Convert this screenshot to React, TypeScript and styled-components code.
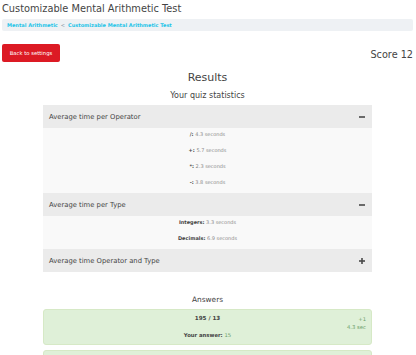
import { useState } from "react";
import { createGlobalStyle, styled } from "styled-components";

const GlobalStyle = createGlobalStyle`
  body {
    margin: 0;
    background: #ffffff;
    font-family: "DejaVu Sans", Verdana, sans-serif;
    color: #555555;
  }
`;

const operatorStats = [
  { label: "/:", value: "4.3 seconds" },
  { label: "+:", value: "5.7 seconds" },
  { label: "*:", value: "2.3 seconds" },
  { label: "-:", value: "3.8 seconds" },
];

const typeStats = [
  { label: "Integers:", value: "3.3 seconds" },
  { label: "Decimals:", value: "6.9 seconds" },
];

type Section = {
  title: string;
  rows: { label: string; value: string }[];
};

const sections: Section[] = [
  { title: "Average time per Operator", rows: operatorStats },
  { title: "Average time per Type", rows: typeStats },
  { title: "Average time Operator and Type", rows: [] },
];

const ToggleIcon = ({ open }: { open: boolean }) => (
  <svg width="6" height="6" viewBox="0 0 6 6">
    <rect x="0" y="2.2" width="6" height="1.6" fill="#4a4a4a" />
    {!open && <rect x="2.2" y="0" width="1.6" height="6" fill="#4a4a4a" />}
  </svg>
);

export default function App() {
  const [open, setOpen] = useState<boolean[]>([true, true, false]);

  return (
    <Page>
      <GlobalStyle />
      <Title>Customizable Mental Arithmetic Test</Title>
      <Breadcrumb>
        <Crumb>Mental Arithmetic</Crumb>
        <Sep>&lt;</Sep>
        <Crumb>Customizable Mental Arithmetic Test</Crumb>
      </Breadcrumb>
      <TopRow>
        <BackButton>Back to settings</BackButton>
        <Score>Score 12</Score>
      </TopRow>
      <Heading>Results</Heading>
      <SubHeading>Your quiz statistics</SubHeading>
      <Accordion>
        {sections.map((s, i) => (
          <div key={s.title}>
            <PanelHeader
              onClick={() =>
                setOpen(open.map((o, j) => (j === i ? !o : o)))
              }
            >
              <span>{s.title}</span>
              <ToggleIcon open={open[i]} />
            </PanelHeader>
            {open[i] && s.rows.length > 0 && (
              <PanelBody>
                {s.rows.map((r) => (
                  <StatRow key={r.label}>
                    <b>{r.label}</b> {r.value}
                  </StatRow>
                ))}
              </PanelBody>
            )}
          </div>
        ))}
      </Accordion>
      <AnswersHeading>Answers</AnswersHeading>
      <AnswerList>
        <AnswerCard>
          <Question>195 / 13</Question>
          <Meta>
            <span>+1</span>
            <span>4.3 sec</span>
          </Meta>
          <YourAnswer>
            <b>Your answer:</b> <Correct>15</Correct>
          </YourAnswer>
        </AnswerCard>
        <AnswerCard />
      </AnswerList>
    </Page>
  );
}

const Page = styled.div`
  padding: 0 3px 0 2px;
  display: flex;
  flex-direction: column;
`;

const Title = styled.h1`
  margin: 2px 0 0;
  font-size: 9.8px;
  font-weight: normal;
  line-height: 13px;
  color: #444444;
`;

const Breadcrumb = styled.div`
  margin-top: 4px;
  height: 12px;
  background: #eef1f4;
  border-radius: 2px;
  display: flex;
  align-items: center;
  gap: 3px;
  padding-left: 5px;
  font-size: 5px;
`;

const Crumb = styled.span`
  color: #1dc4e8;
  font-weight: bold;
`;

const Sep = styled.span`
  color: #8a9aa4;
`;

const TopRow = styled.div`
  margin-top: 13px;
  display: flex;
  align-items: center;
  justify-content: space-between;
`;

const BackButton = styled.button`
  width: 58px;
  height: 18px;
  border: none;
  border-radius: 2px;
  background: #dc1a24;
  color: #ffffff;
  font-family: inherit;
  font-size: 5.3px;
  padding: 0;
`;

const Score = styled.div`
  font-size: 9.7px;
  color: #444444;
  margin-top: 2px;
`;

const Heading = styled.h2`
  margin: 8px 0 0;
  text-align: center;
  font-size: 11px;
  font-weight: normal;
  line-height: 16px;
  color: #444444;
`;

const SubHeading = styled.h3`
  margin: 4px 0 0;
  text-align: center;
  font-size: 8px;
  font-weight: normal;
  line-height: 12px;
  color: #444444;
`;

const Accordion = styled.div`
  margin: 3px auto 0;
  width: 329px;
`;

const PanelHeader = styled.div`
  height: 23px;
  background: #ebebeb;
  display: flex;
  align-items: center;
  justify-content: space-between;
  padding: 0 7px 0 6px;
  font-size: 6.8px;
  color: #444444;
  cursor: pointer;
`;

const PanelBody = styled.div`
  background: #f9f9f9;
  padding: 0 0 1px;
  display: flex;
  flex-direction: column;
  align-items: center;
`;

const StatRow = styled.div`
  height: 16px;
  line-height: 12px;
  font-size: 5px;
  color: #8a8a8a;

  b {
    color: #444444;
  }
`;

const AnswersHeading = styled.div`
  margin-top: 23px;
  text-align: center;
  font-size: 7.4px;
  color: #444444;
  line-height: 10px;
`;

const AnswerList = styled.div`
  margin: 4px auto 0;
  width: 329px;
  display: flex;
  flex-direction: column;
  gap: 5px;
`;

const AnswerCard = styled.div`
  position: relative;
  height: 36px;
  background: #dff0d8;
  border: 1px solid #d6e9c6;
  border-radius: 3px;
  box-sizing: border-box;
  display: flex;
  flex-direction: column;
  align-items: center;
  font-size: 5.3px;
  color: #444444;
`;

const Question = styled.div`
  margin-top: 5px;
  font-weight: bold;
  font-size: 5.6px;
`;

const Meta = styled.div`
  position: absolute;
  right: 5px;
  top: 6px;
  display: flex;
  flex-direction: column;
  align-items: flex-end;
  gap: 2px;
  color: #6aa06a;
`;

const YourAnswer = styled.div`
  margin-top: 11px;
`;

const Correct = styled.span`
  color: #6aa06a;
`;
